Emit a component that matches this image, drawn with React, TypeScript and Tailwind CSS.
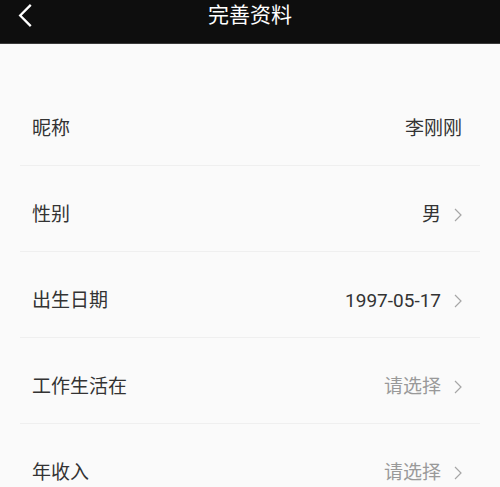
import React from "react";

interface Row {
  label: string;
  value: string;
  placeholder?: boolean;
  arrow: boolean;
}

const rows: Row[] = [
  { label: "昵称", value: "李刚刚", arrow: false },
  { label: "性别", value: "男", arrow: true },
  { label: "出生日期", value: "1997-05-17", arrow: true },
  { label: "工作生活在", value: "请选择", placeholder: true, arrow: true },
  { label: "年收入", value: "请选择", placeholder: true, arrow: true },
];

function Chevron({ className }: { className?: string }) {
  return (
    <svg viewBox="0 0 8 14" className={className} fill="none">
      <path d="M1 1l6 6-6 6" stroke="currentColor" strokeWidth="1.2" />
    </svg>
  );
}

export default function App() {
  return (
    <div
      className="h-[487px] w-[500px] overflow-hidden bg-[#fafafa]"
      style={{ fontFamily: "Roboto, 'Noto Sans CJK SC', sans-serif" }}
    >
      <header className="relative flex h-[44px] items-center justify-center border-b border-[#3a3a3a] bg-[#0e0e0e]">
        <button className="absolute left-[17px] top-[3px] text-white">
          <svg viewBox="0 0 16 26" className="h-[25px] w-[16px]" fill="none">
            <path d="M14 2L3 13l11 11" stroke="currentColor" strokeWidth="2.4" />
          </svg>
        </button>
        <h1 className="-mt-[13px] text-[21px] leading-none text-white">完善资料</h1>
      </header>

      <main className="mx-5 pt-[36px]">
        {rows.map((r) => (
          <div
            key={r.label}
            className="flex h-[86px] items-center justify-between border-b border-[#efefef] pt-[13px] pl-3 pr-[18px]"
          >
            <span className="text-[19px] text-[#333333]">{r.label}</span>
            <div className="flex items-center">
              <span
                className={
                  r.placeholder
                    ? "text-[19px] text-[#999999]"
                    : "text-[19px] text-[#333333]"
                }
              >
                {r.value}
              </span>
              {r.arrow && <Chevron className="ml-[13px] h-[14px] w-[8px] text-[#a6a6a6]" />}
            </div>
          </div>
        ))}
      </main>
    </div>
  );
}
